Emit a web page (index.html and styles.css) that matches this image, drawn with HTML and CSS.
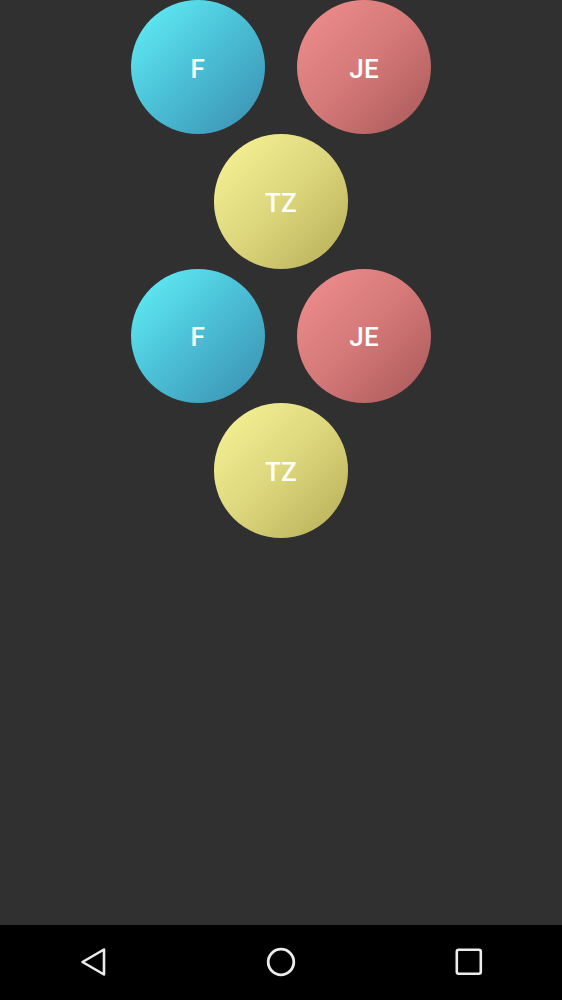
FILE: index.html
```html
<!DOCTYPE html>
<html>
<head>
<meta charset="utf-8">
<link rel="stylesheet" href="styles.css">
</head>
<body>
<div class="screen">
  <main class="content">
    <div class="row pair">
      <div class="avatar cyan">F</div>
      <div class="avatar red">JE</div>
    </div>
    <div class="row">
      <div class="avatar yellow">TZ</div>
    </div>
    <div class="row pair">
      <div class="avatar cyan">F</div>
      <div class="avatar red">JE</div>
    </div>
    <div class="row">
      <div class="avatar yellow">TZ</div>
    </div>
  </main>
  <nav class="navbar">
    <svg class="nav-icon" width="30" height="32" viewBox="0 0 30 32">
      <path d="M4.5 15 L26 2.5 L26 27.5 Z" fill="none" stroke="#ececec" stroke-width="2.6" stroke-linejoin="round"/>
    </svg>
    <svg class="nav-icon" width="30" height="32" viewBox="0 0 30 32">
      <circle cx="15" cy="15" r="12.8" fill="none" stroke="#ececec" stroke-width="2.8"/>
    </svg>
    <svg class="nav-icon" width="30" height="32" viewBox="0 0 30 32">
      <rect x="2.8" y="2.8" width="24" height="24" rx="2" fill="none" stroke="#ececec" stroke-width="2.6"/>
    </svg>
  </nav>
</div>
</body>
</html>
```

FILE: styles.css
```css
html, body {
  margin: 0;
  padding: 0;
  background: #303030;
}
.screen {
  width: 562px;
  height: 1000px;
  display: flex;
  flex-direction: column;
  background: #303030;
}
.content {
  flex: 1;
  display: flex;
  flex-direction: column;
}
.row {
  display: flex;
  justify-content: center;
  gap: 32px;
  height: 134.4px;
}
.avatar {
  width: 134.4px;
  height: 134.4px;
  border-radius: 50%;
  display: flex;
  align-items: center;
  justify-content: center;
  color: #ffffff;
  font-family: Roboto, "Liberation Sans", sans-serif;
  font-weight: 500;
  font-size: 26px;
  letter-spacing: 0.3px;
  padding-top: 3px;
  box-sizing: border-box;
}
.cyan {
  background: linear-gradient(135deg, #62f3fa 0%, #4cc3d8 45%, #3a8db0 100%);
}
.red {
  background: linear-gradient(135deg, #f28f8f 0%, #d47878 50%, #a85858 100%);
}
.yellow {
  background: linear-gradient(135deg, #f8f597 0%, #dcd67c 50%, #b6ad56 100%);
}
.navbar {
  height: 75px;
  background: #000000;
  display: flex;
  align-items: center;
  justify-content: space-between;
  padding: 0 78px 0 78px;
}
.nav-icon {
  display: block;
}
```
